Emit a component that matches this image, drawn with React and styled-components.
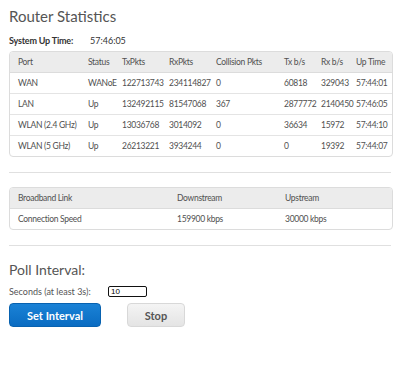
import React from "react";
import styled, { createGlobalStyle } from "styled-components";

const Global = createGlobalStyle`
  html, body { margin: 0; padding: 0; background: #fff; }
  body { font-family: Lato, "Open Sans", sans-serif; color: #555; }
`;

const Page = styled.div`
  width: 382px;
  padding: 7px 9px 0 9px;
`;

const Title = styled.h1`
  margin: 0;
  font-size: 15px;
  line-height: 18px;
  font-weight: 400;
  color: #555;
`;

const UpTimeRow = styled.div`
  display: flex;
  align-items: center;
  margin-top: 7px;
  height: 16px;
  font-size: 9px;
  color: #333;
`;

const UpLabel = styled.span`
  font-weight: 700;
  width: 81px;
  letter-spacing: -0.2px;
`;

const Table = styled.table`
  width: 382px;
  table-layout: fixed;
  border-collapse: separate;
  border-spacing: 0;
  border: 1px solid #dcdcdc;
  border-radius: 4px;
  overflow: hidden;
  margin-top: ${(p) => p.$mt || 0}px;
  font-size: 8.5px;
  letter-spacing: -0.3px;
  color: #505050;
`;

const Th = styled.th`
  background: #ececec;
  font-weight: 400;
  text-align: left;
  height: 20px;
  padding: 0 0 0 ${(p) => (p.$first ? 8 : 4)}px;
  white-space: nowrap;
  border-bottom: 1px solid #dcdcdc;
`;

const Td = styled.td`
  height: 20px;
  padding: 0 0 0 ${(p) => (p.$first ? 8 : 4)}px;
  white-space: nowrap;
  border-bottom: ${(p) => (p.$last ? "none" : "1px solid #e4e4e4")};
`;

const Rule = styled.hr`
  border: none;
  border-top: 1.5px solid #e0e0e0;
  margin: 0;
  margin-top: ${(p) => p.$mt}px;
`;

const PollTitle = styled.h2`
  margin: 15px 0 0 0;
  font-size: 14px;
  line-height: 18px;
  font-weight: 400;
  color: #555;
`;

const SecRow = styled.div`
  display: flex;
  align-items: center;
  margin-top: 6px;
  height: 12px;
  font-size: 9px;
  color: #555;
`;

const SecLabel = styled.span`
  width: 99px;
`;

const Input = styled.input`
  box-sizing: border-box;
  width: 39px;
  height: 11px;
  border: 1.5px solid #111;
  border-radius: 2px;
  padding: 0 2px;
  font-size: 8px;
  font-family: "Liberation Sans", sans-serif;
  color: #000;
  outline: none;
`;

const Buttons = styled.div`
  display: flex;
  margin-top: 6px;
  gap: 26px;
`;

const Button = styled.button`
  box-sizing: border-box;
  height: 24px;
  width: ${(p) => p.$w}px;
  border-radius: 4px;
  font-family: Lato, sans-serif;
  font-weight: 700;
  font-size: 11px;
  cursor: pointer;
  ${(p) =>
    p.$primary
      ? `background: linear-gradient(#1a82d6, #0a6cc2); color: #fff; border: 1px solid #0862b0;`
      : `background: linear-gradient(#f4f4f4, #e4e4e4); color: #555; border: 1px solid #d8d8d8;`}
`;

const rows = [
  ["WAN", "WANoE", "122713743", "234114827", "0", "60818", "329043", "57:44:01"],
  ["LAN", "Up", "132492115", "81547068", "367", "2877772", "2140450", "57:46:05"],
  ["WLAN (2.4 GHz)", "Up", "13036768", "3014092", "0", "36634", "15972", "57:44:10"],
  ["WLAN (5 GHz)", "Up", "26213221", "3934244", "0", "0", "19392", "57:44:07"],
];

const headers = ["Port", "Status", "TxPkts", "RxPkts", "Collision Pkts", "Tx b/s", "Rx b/s", "Up Time"];
const widths = [74, 34, 47, 47, 68, 37, 35, 40];

export default function App() {
  return (
    <Page>
      <Global />
      <Title>Router Statistics</Title>
      <UpTimeRow>
        <UpLabel>System Up Time:</UpLabel>
        <span>57:46:05</span>
      </UpTimeRow>
      <Table $mt={3}>
        <colgroup>
          {widths.map((w, i) => (
            <col key={i} style={{ width: w }} />
          ))}
        </colgroup>
        <thead>
          <tr>
            {headers.map((h, i) => (
              <Th key={h} $first={i === 0}>{h}</Th>
            ))}
          </tr>
        </thead>
        <tbody>
          {rows.map((r, ri) => (
            <tr key={ri}>
              {r.map((c, i) => (
                <Td key={i} $first={i === 0} $last={ri === rows.length - 1}>{c}</Td>
              ))}
            </tr>
          ))}
        </tbody>
      </Table>
      <Rule $mt={15} />
      <Table $mt={14}>
        <colgroup>
          <col style={{ width: 163 }} />
          <col style={{ width: 108 }} />
          <col style={{ width: 111 }} />
        </colgroup>
        <thead>
          <tr>
            <Th $first>Broadband Link</Th>
            <Th>Downstream</Th>
            <Th>Upstream</Th>
          </tr>
        </thead>
        <tbody>
          <tr>
            <Td $first $last>Connection Speed</Td>
            <Td $last>159900 kbps</Td>
            <Td $last>30000 kbps</Td>
          </tr>
        </tbody>
      </Table>
      <Rule $mt={15} />
      <PollTitle>Poll Interval:</PollTitle>
      <SecRow>
        <SecLabel>Seconds (at least 3s):</SecLabel>
        <Input defaultValue="10" />
      </SecRow>
      <Buttons>
        <Button $primary $w={92}>Set Interval</Button>
        <Button $w={58}>Stop</Button>
      </Buttons>
    </Page>
  );
}
